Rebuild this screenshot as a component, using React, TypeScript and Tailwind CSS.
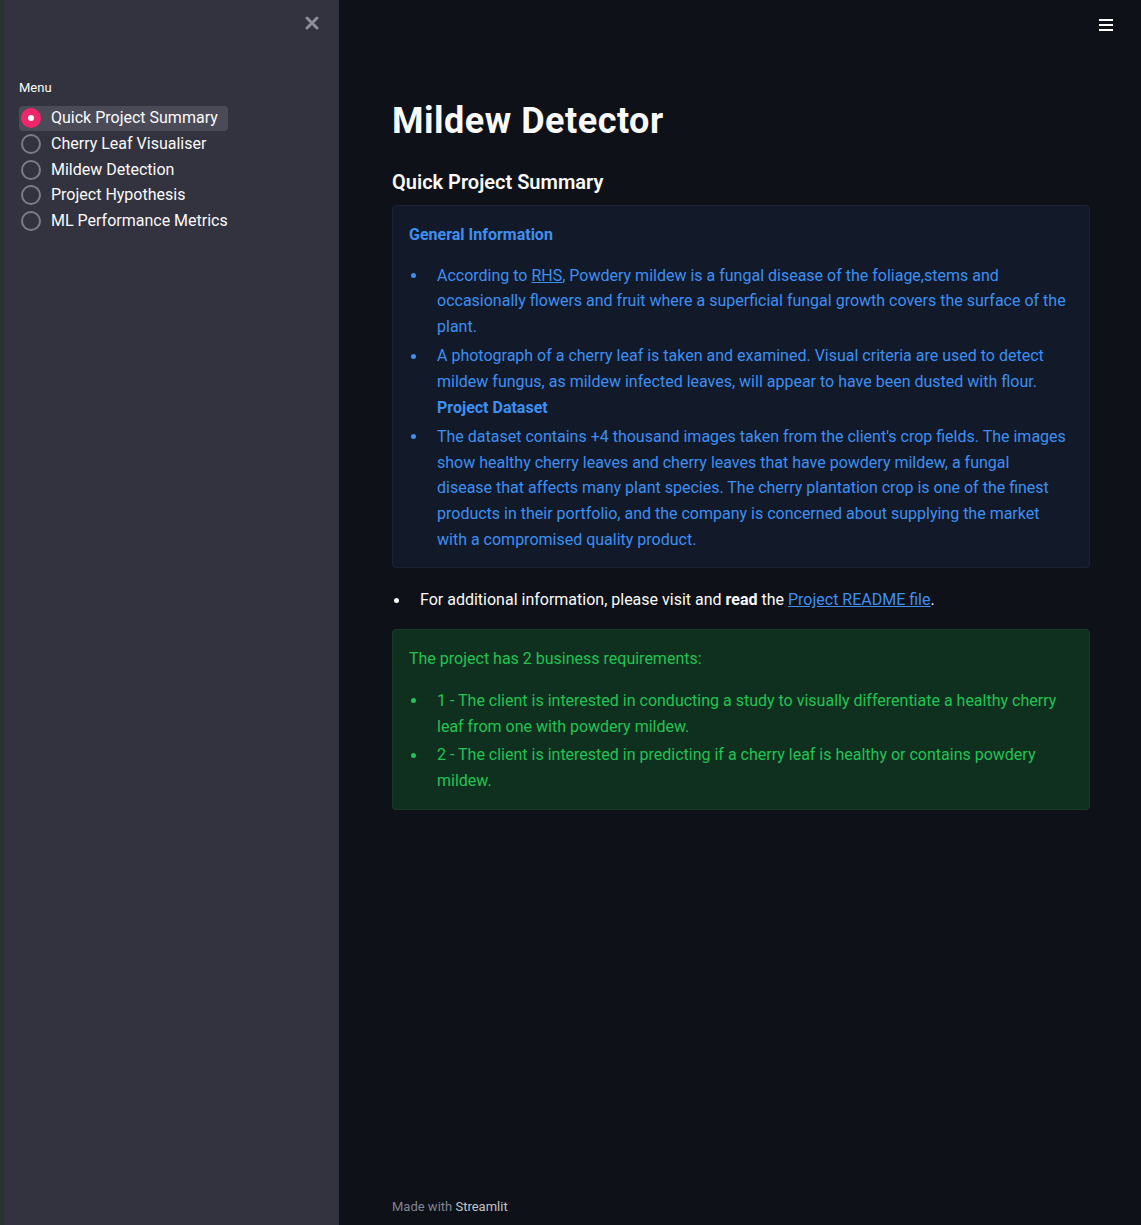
import React from "react";

const menuItems = [
  "Quick Project Summary",
  "Cherry Leaf Visualiser",
  "Mildew Detection",
  "Project Hypothesis",
  "ML Performance Metrics",
];

function Sidebar() {
  return (
    <aside className="relative w-[335px] shrink-0 bg-[#33333f] min-h-full">
      <button className="absolute right-[20px] top-[16px]">
        <svg width="14" height="14" viewBox="0 0 14 14">
          <path d="M2 2 L12 12 M12 2 L2 12" stroke="#8d8d97" strokeWidth="3" strokeLinecap="round" />
        </svg>
      </button>
      <div className="pt-[78px] pl-[15px]">
        <div className="text-[13px] text-[#fafafa] mb-[8px]">Menu</div>
        <div className="flex flex-col items-start">
          {menuItems.map((item, i) => (
            <div
              key={item}
              className={`flex items-center h-[25.7px] pr-[10px] pl-[2px] rounded-[4px] ${
                i === 0 ? "bg-[#4b4b58]" : ""
              }`}
            >
              {i === 0 ? (
                <span className="w-[20px] h-[20px] rounded-full bg-[#f0266b] flex items-center justify-center">
                  <span className="w-[6px] h-[6px] rounded-full bg-white" />
                </span>
              ) : (
                <span className="w-[20px] h-[20px] rounded-full border-2 border-[#7c7c86]" />
              )}
              <span className="ml-[10px] text-[16px] text-[#fafafa]">{item}</span>
            </div>
          ))}
        </div>
      </div>
    </aside>
  );
}

function Bullet({ children, color }: { children: React.ReactNode; color: string }) {
  return (
    <li className="flex">
      <span className="shrink-0 flex w-[28px] pl-[2px] h-[25.7px] items-center">
        <span className={`block w-[5px] h-[5px] rounded-full ${color}`} />
      </span>
      <div className="flex-1">{children}</div>
    </li>
  );
}

export default function App() {
  return (
    <div
      className="flex w-[1141px] h-[1225px] bg-[#0e1117] overflow-hidden"
      style={{ fontFamily: '"Roboto", "Noto Sans", sans-serif' }}
    >
      <div className="w-[4px] shrink-0 bg-[#27332f]" />
      <Sidebar />
      <main className="relative flex-1 flex flex-col">
        <button className="absolute right-[28px] top-[19px] flex flex-col gap-[3px]">
          <span className="block w-[14px] h-[2px] bg-white" />
          <span className="block w-[14px] h-[2px] bg-white" />
          <span className="block w-[14px] h-[2px] bg-white" />
        </button>
        <div className="pl-[53px] pr-[51px] pt-[98px] flex-1">
          <h1 className="text-[36px] font-bold tracking-[0.5px] text-[#fafafa] leading-[46px]">Mildew Detector</h1>
          <h3 className="mt-[24px] text-[20px] font-semibold text-[#fafafa] leading-[28px]">
            Quick Project Summary
          </h3>
          <div className="mt-[9px] rounded-[4px] border border-[#1a2436] bg-[#121a29] px-[16px] pt-[16px] pb-[15px] text-[16px] leading-[25.7px] text-[#3d8ff2]">
            <p className="font-bold">General Information</p>
            <ul className="mt-[15px] flex flex-col gap-[3.5px]">
              <Bullet color="bg-[#3d8ff2]">
                According to <a className="underline">RHS</a>, Powdery mildew is a fungal disease of the
                foliage,stems and occasionally flowers and fruit where a superficial fungal growth covers
                the surface of the plant.
              </Bullet>
              <Bullet color="bg-[#3d8ff2]">
                A photograph of a cherry leaf is taken and examined. Visual criteria are used to detect
                mildew fungus, as mildew infected leaves, will appear to have been dusted with flour.
                <br />
                <span className="font-bold">Project Dataset</span>
              </Bullet>
              <Bullet color="bg-[#3d8ff2]">
                The dataset contains +4 thousand images taken from the client's crop fields. The images
                show healthy cherry leaves and cherry leaves that have powdery mildew, a fungal
                <br />
                disease that affects many plant species. The cherry plantation crop is one of the finest
                products in their portfolio, and the company is concerned about supplying the market
                <br />
                with a compromised quality product.
              </Bullet>
            </ul>
          </div>
          <ul className="mt-[19px] text-[16px] leading-[25.7px] text-[#fafafa]">
            <Bullet color="bg-[#fafafa]">
              For additional information, please visit and <span className="font-bold">read</span> the{" "}
              <a className="underline text-[#3d8ff2]">Project README file</a>.
            </Bullet>
          </ul>
          <div className="mt-[16px] rounded-[4px] border border-[#173b25] bg-[#10301f] px-[16px] pt-[16px] pb-[15px] text-[16px] leading-[25.7px] text-[#21c354]">
            <p>The project has 2 business requirements:</p>
            <ul className="mt-[16px] flex flex-col gap-[3px]">
              <Bullet color="bg-[#21c354]">
                1 - The client is interested in conducting a study to visually differentiate a healthy
                cherry leaf from one with powdery mildew.
              </Bullet>
              <Bullet color="bg-[#21c354]">
                2 - The client is interested in predicting if a cherry leaf is healthy or contains powdery
                mildew.
              </Bullet>
            </ul>
          </div>
        </div>
        <footer className="pl-[53px] pb-[9px] text-[13px] text-[#808495]">
          Made with <span className="text-[#c3c3c8]">Streamlit</span>
        </footer>
      </main>
    </div>
  );
}
